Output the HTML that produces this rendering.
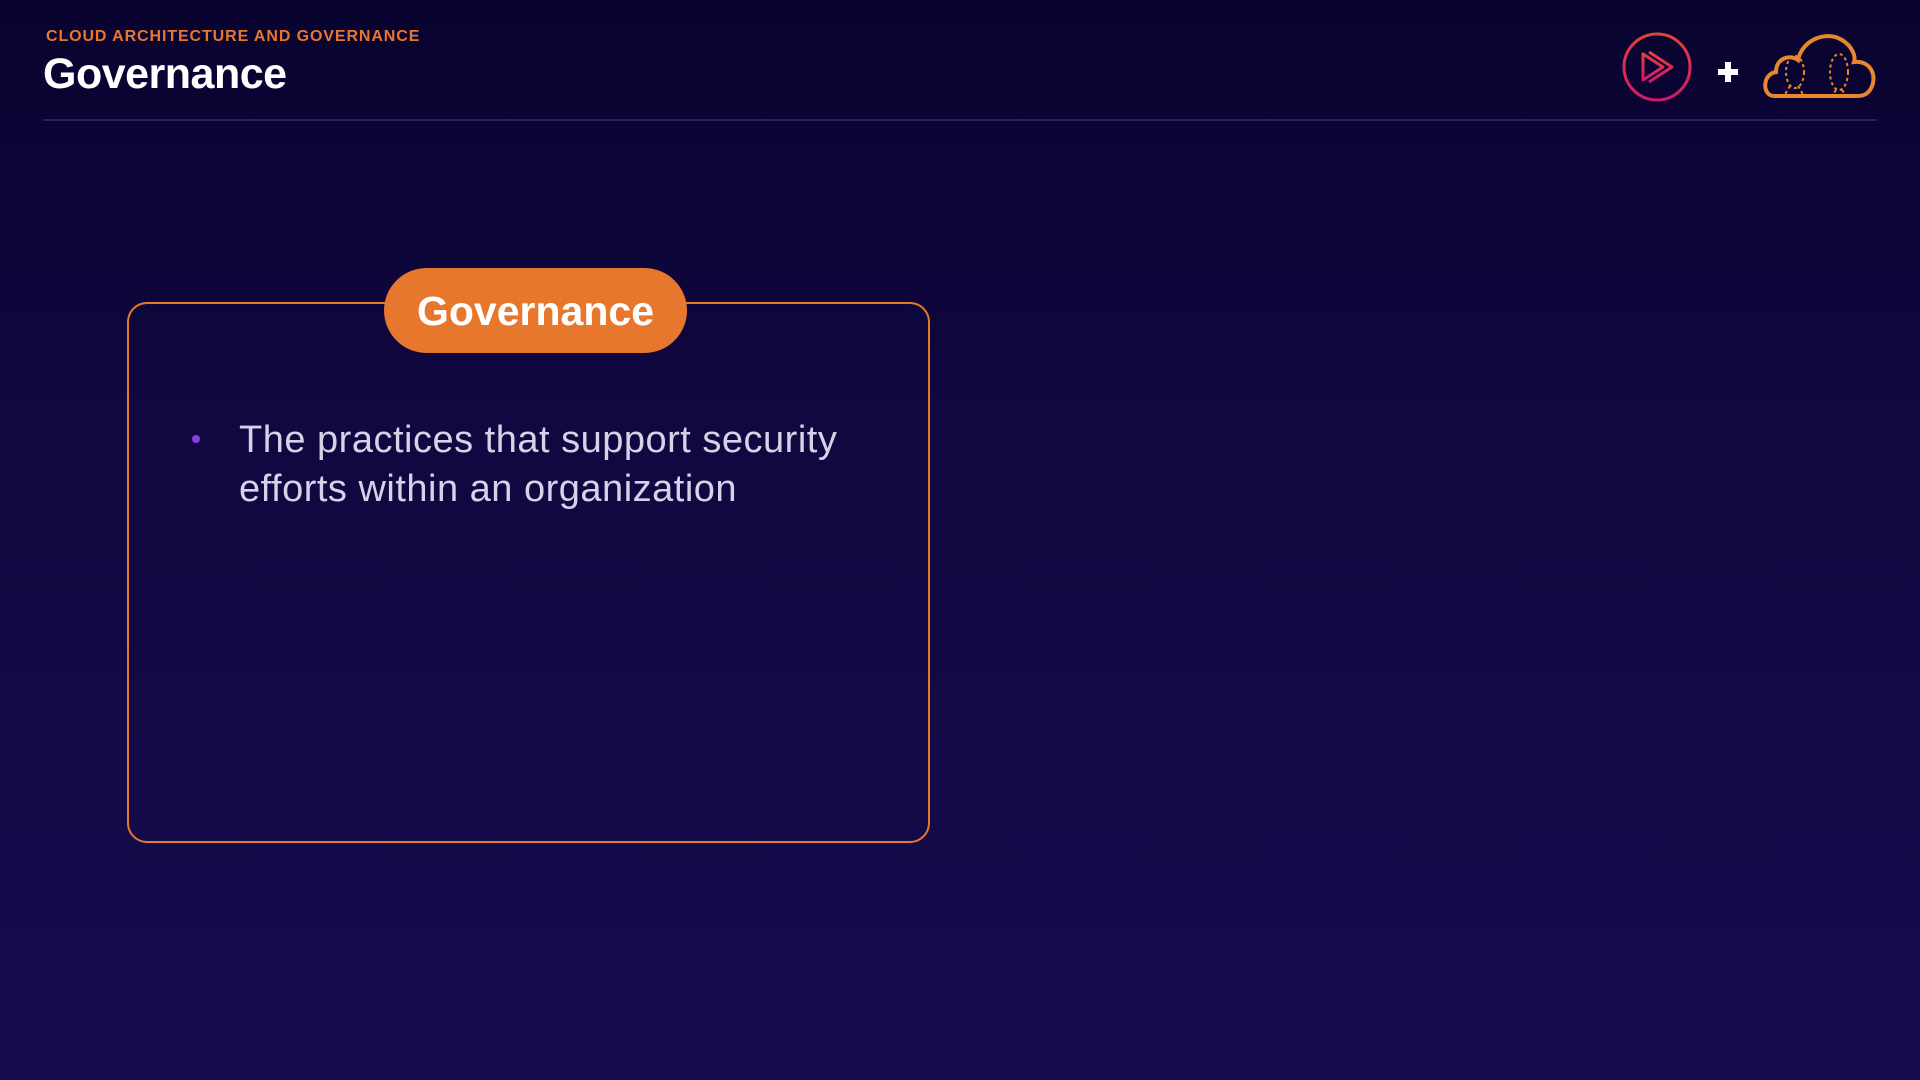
<!DOCTYPE html>
<html><head><meta charset="utf-8"><style>
html,body{margin:0;width:1920px;height:1080px;overflow:hidden}
body{background:linear-gradient(180deg,#09032f 0%,#100840 40%,#170c4e 100%);font-family:"Liberation Sans",sans-serif;position:relative}
.sub{position:absolute;left:46px;top:28px;color:#e8772e;font-weight:bold;font-size:16px;letter-spacing:0.9px}
.title{position:absolute;left:43px;top:50px;color:#fff;font-weight:bold;font-size:43px;letter-spacing:-0.5px}
.line{position:absolute;left:43px;top:119px;width:1834px;height:2px;background:#2a2358}
.box{position:absolute;left:127px;top:302px;width:799px;height:537px;border:2px solid #e8772e;border-radius:20px}
.pill{position:absolute;left:384px;top:268px;width:303px;height:85px;border-radius:43px;background:#e8772e;color:#fff;font-weight:bold;font-size:41px;text-align:center;line-height:86px}
.txt{position:absolute;left:239px;top:416px;color:#d6d2e8;font-size:38px;letter-spacing:0.5px;line-height:49px}
.dot{position:absolute;left:192px;top:435px;width:8px;height:8px;border-radius:50%;background:#8a3fe0}
</style></head><body>
<div class="sub">CLOUD ARCHITECTURE AND GOVERNANCE</div>
<div class="title">Governance</div>
<div class="line"></div>
<svg style="position:absolute;left:1620px;top:30px" width="80" height="75" viewBox="0 0 80 75">
<defs><linearGradient id="g" x1="0" y1="0" x2="0" y2="1"><stop offset="0" stop-color="#e0433a"/><stop offset="1" stop-color="#d2186a"/></linearGradient></defs>
<circle cx="37" cy="37" r="33" fill="none" stroke="url(#g)" stroke-width="3"/>
<path d="M23 24 V50 L43 37 Z M29 22 L52 37 L29 52" fill="none" stroke="url(#g)" stroke-width="3" stroke-linejoin="round"/>
</svg>
<div style="position:absolute;left:1718px;top:69px;width:20px;height:6px;background:#fff"></div>
<div style="position:absolute;left:1725px;top:62px;width:6px;height:20px;background:#fff"></div>
<svg style="position:absolute;left:1760px;top:28px" width="120" height="74" viewBox="0 0 120 74">
<path d="M14 68 C2 68 2 46 16 44 C16 30 30 26 38 32 C42 12 66 2 82 12 C92 18 96 28 94 34 C112 32 118 50 110 62 C106 68 100 68 96 68 Z" fill="none" stroke="#e8872e" stroke-width="4"/>
<g fill="none" stroke="#e8872e" stroke-width="2" stroke-dasharray="3 3">
<ellipse cx="35" cy="44" rx="9" ry="16"/><ellipse cx="79" cy="44" rx="9" ry="18"/>
<path d="M30 58 L24 68 M38 58 L44 68 M76 62 L72 68 M82 62 L86 68"/></g>
</svg>
<div class="box"></div>
<div class="pill">Governance</div>
<div class="dot"></div>
<div class="txt">The practices that support security<br>efforts within an organization</div>
</body></html>
